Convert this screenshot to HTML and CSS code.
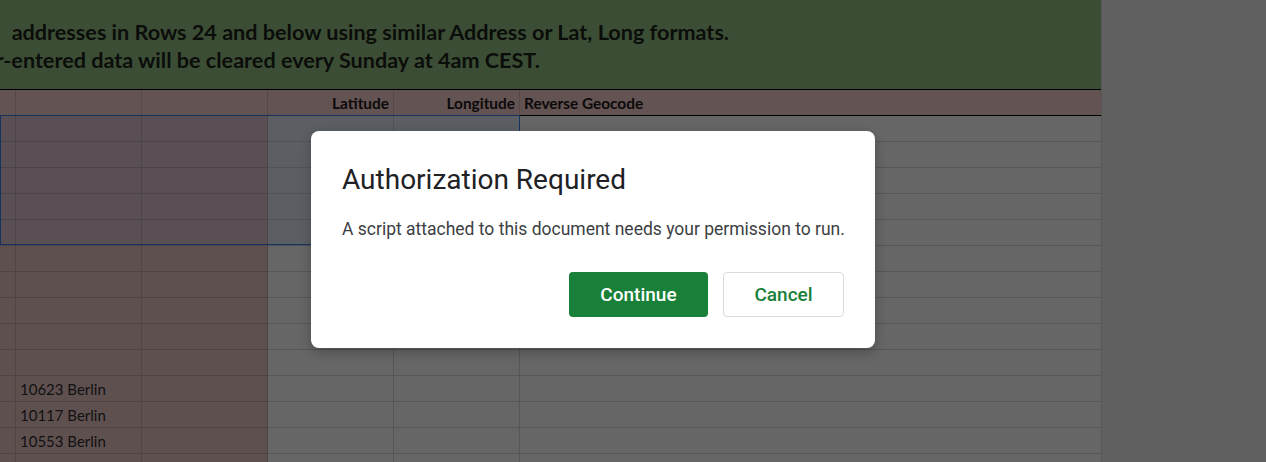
FILE: index.html
```html
<!DOCTYPE html>
<html>
<head>
<meta charset="utf-8">
<link rel="stylesheet" href="styles.css">
</head>
<body>
<div class="page">
  <div class="sheet">
    <div class="banner">
      <div class="banner-line l1"><span>Enter addresses in Rows 24 and below using similar Address or Lat, Long formats.</span></div>
      <div class="banner-line l2"><span>User-entered data will be cleared every Sunday at 4am CEST.</span></div>
    </div>
    <div class="grid">
      <div class="cell hd"></div><div class="cell hd"></div><div class="cell hd"></div><div class="cell hd right">Latitude</div><div class="cell hd right">Longitude</div><div class="cell hd last">Reverse Geocode</div>

      <div class="cell ps"></div><div class="cell ps"></div><div class="cell ps"></div><div class="cell gs"></div><div class="cell gs"></div><div class="cell g last"></div>
      <div class="cell ps"></div><div class="cell ps"></div><div class="cell ps"></div><div class="cell gs"></div><div class="cell gs"></div><div class="cell g last"></div>
      <div class="cell ps"></div><div class="cell ps"></div><div class="cell ps"></div><div class="cell gs"></div><div class="cell gs"></div><div class="cell g last"></div>
      <div class="cell ps"></div><div class="cell ps"></div><div class="cell ps"></div><div class="cell gs"></div><div class="cell gs"></div><div class="cell g last"></div>
      <div class="cell ps"></div><div class="cell ps"></div><div class="cell ps"></div><div class="cell gs"></div><div class="cell gs"></div><div class="cell g last"></div>
      <div class="cell p"></div><div class="cell p"></div><div class="cell p"></div><div class="cell g"></div><div class="cell g"></div><div class="cell g last"></div>
      <div class="cell p"></div><div class="cell p"></div><div class="cell p"></div><div class="cell g"></div><div class="cell g"></div><div class="cell g last"></div>
      <div class="cell p"></div><div class="cell p"></div><div class="cell p"></div><div class="cell g"></div><div class="cell g"></div><div class="cell g last"></div>
      <div class="cell p"></div><div class="cell p"></div><div class="cell p"></div><div class="cell g"></div><div class="cell g"></div><div class="cell g last"></div>
      <div class="cell p"></div><div class="cell p"></div><div class="cell p"></div><div class="cell g"></div><div class="cell g"></div><div class="cell g last"></div>
      <div class="cell p"></div><div class="cell p">10623 Berlin</div><div class="cell p"></div><div class="cell g"></div><div class="cell g"></div><div class="cell g last"></div>
      <div class="cell p"></div><div class="cell p">10117 Berlin</div><div class="cell p"></div><div class="cell g"></div><div class="cell g"></div><div class="cell g last"></div>
      <div class="cell p"></div><div class="cell p">10553 Berlin</div><div class="cell p"></div><div class="cell g"></div><div class="cell g"></div><div class="cell g last"></div>
      <div class="cell p"></div><div class="cell p">10115 Berlin</div><div class="cell p"></div><div class="cell g"></div><div class="cell g"></div><div class="cell g last"></div>
    </div>
    <div class="selection"></div>
  </div>
  <div class="side"></div>

  <div class="dialog">
    <h1 class="dialog-title">Authorization Required</h1>
    <p class="dialog-text">A script attached to this document needs your permission to run.</p>
    <div class="dialog-actions">
      <button class="btn btn-primary">Continue</button>
      <button class="btn btn-secondary">Cancel</button>
    </div>
  </div>
</div>
</body>
</html>
```

FILE: styles.css
```css
* { box-sizing: border-box; }
html, body { margin: 0; padding: 0; }
body {
  width: 1266px;
  height: 462px;
  overflow: hidden;
  background: #606060;
  font-family: Lato, "Liberation Sans", sans-serif;
}
.page {
  position: relative;
  display: flex;
  width: 1266px;
  height: 462px;
  overflow: hidden;
}
.sheet {
  position: relative;
  width: 1101px;
  flex: none;
  overflow: hidden;
}
.side {
  flex: 1;
  background: #606060;
  border-left: 1px solid #575757;
}
.banner {
  height: 90px;
  background: #3c4d35;
  border-bottom: 1px solid #000;
  padding-top: 18px;
  color: #0b0d0a;
  font-weight: 700;
  font-size: 21.6px;
  line-height: 28px;
  white-space: nowrap;
}
.banner-line {
  display: flex;
  justify-content: flex-end;
  overflow: hidden;
}
.banner-line span { flex: none; }
.banner-line.l1 { width: 722px; margin-left: 7px; }
.banner-line.l2 { width: 543px; margin-left: -3px; }

.grid {
  display: grid;
  grid-template-columns: 16px 126px 126px 126px 126px 1fr;
  grid-auto-rows: 26px;
  font-size: 15px;
  color: #111;
}
.cell {
  border-right: 1px solid #4f4444;
  border-bottom: 1px solid #4f4444;
  padding: 2px 4px 0 4px;
  line-height: 23px;
  white-space: nowrap;
  overflow: hidden;
}
.cell.last { border-right: none; }
.cell.hd {
  background: #635352;
  border-bottom: 1px solid #000;
  border-right-color: #574948;
  font-weight: 700;
  font-size: 15.4px;
  color: #0c0a0a;
}
.cell.right { text-align: right; }
.cell.p { background: #5f5050; }
.cell.ps { background: #594f55; border-color: #4d4448; }
.cell.g { background: #666666; border-color: #565656; }
.cell.gs { background: #5b5f63; border-color: #505458; }

.selection {
  position: absolute;
  left: 0;
  top: 115px;
  width: 520px;
  height: 130px;
  border: 1px solid #16325e;
}

.dialog {
  position: absolute;
  left: 311px;
  top: 131px;
  width: 564px;
  height: 217px;
  background: #fff;
  border-radius: 8px;
  box-shadow: 0 4px 12px rgba(0,0,0,0.25);
  padding: 32px 31px 0 31px;
  font-family: Roboto, "Liberation Sans", sans-serif;
}
.dialog-title {
  margin: 0;
  font-size: 28px;
  font-weight: 400;
  line-height: 34px;
  color: #202124;
}
.dialog-text {
  margin: 20px 0 0 0;
  font-size: 17.5px;
  line-height: 24px;
  color: #3c4043;
  white-space: nowrap;
}
.dialog-actions {
  display: flex;
  justify-content: flex-end;
  gap: 15px;
  margin-top: 31px;
}
.btn {
  height: 45px;
  border-radius: 4px;
  font-family: Roboto, "Liberation Sans", sans-serif;
  font-size: 19px;
  font-weight: 500;
  padding: 0;
  cursor: pointer;
}
.btn-primary {
  width: 139px;
  background: #188038;
  border: none;
  color: #fff;
}
.btn-secondary {
  width: 121px;
  background: #fff;
  border: 1px solid #dadce0;
  color: #188038;
}
```
